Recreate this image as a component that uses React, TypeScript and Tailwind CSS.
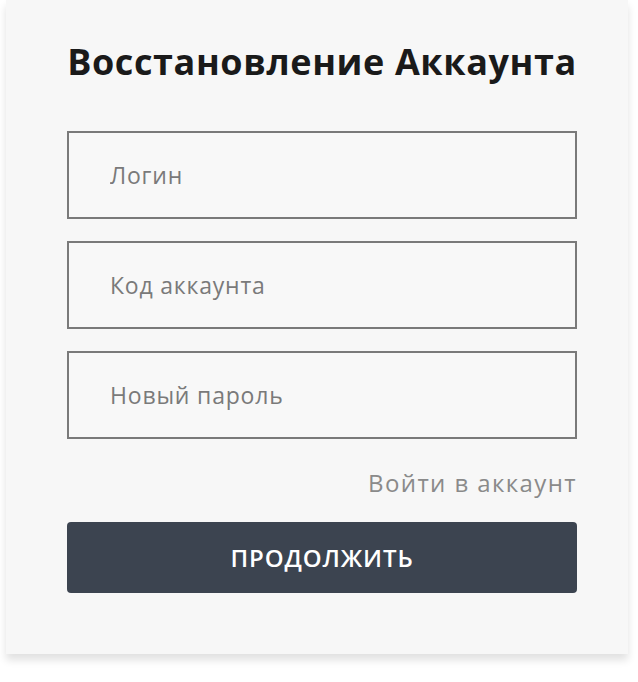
export default function App() {
  const fields = ['Логин', 'Код аккаунта', 'Новый пароль'];
  return (
    <div className="w-[638px] h-[682px] bg-white" style={{ fontFamily: '"Open Sans", "Liberation Sans", sans-serif' }}>
      <div className="ml-[6px] w-[622px] h-[654px] bg-[#f7f7f7] shadow-[0_6px_8px_rgba(0,0,0,0.12)] pt-[37px] pl-[61px] pr-[51px]">
        <h1 className="text-center text-[36px] font-bold text-[#1a1a1a] leading-[50px] tracking-[0.6px]">
          Восстановление Аккаунта
        </h1>
        <div className="mt-[44px] flex flex-col gap-[22px]">
          {fields.map((f) => (
            <input
              key={f}
              placeholder={f}
              className="h-[88px] w-full border-2 border-[#7a7a7a] bg-[#f8f8f8] pl-[41px] text-[23px] tracking-[0.8px] text-[#555] placeholder:text-[#7a7a7a] outline-none"
            />
          ))}
        </div>
        <div className="mt-[27px] text-right text-[24px] tracking-[1.4px] text-[#8a8a8a] leading-[34px]">Войти в аккаунт</div>
        <button className="mt-[22px] h-[71px] w-full rounded-[4px] bg-[#3c4450] text-white text-[24px] font-semibold tracking-[0.9px]">
          ПРОДОЛЖИТЬ
        </button>
      </div>
    </div>
  );
}
